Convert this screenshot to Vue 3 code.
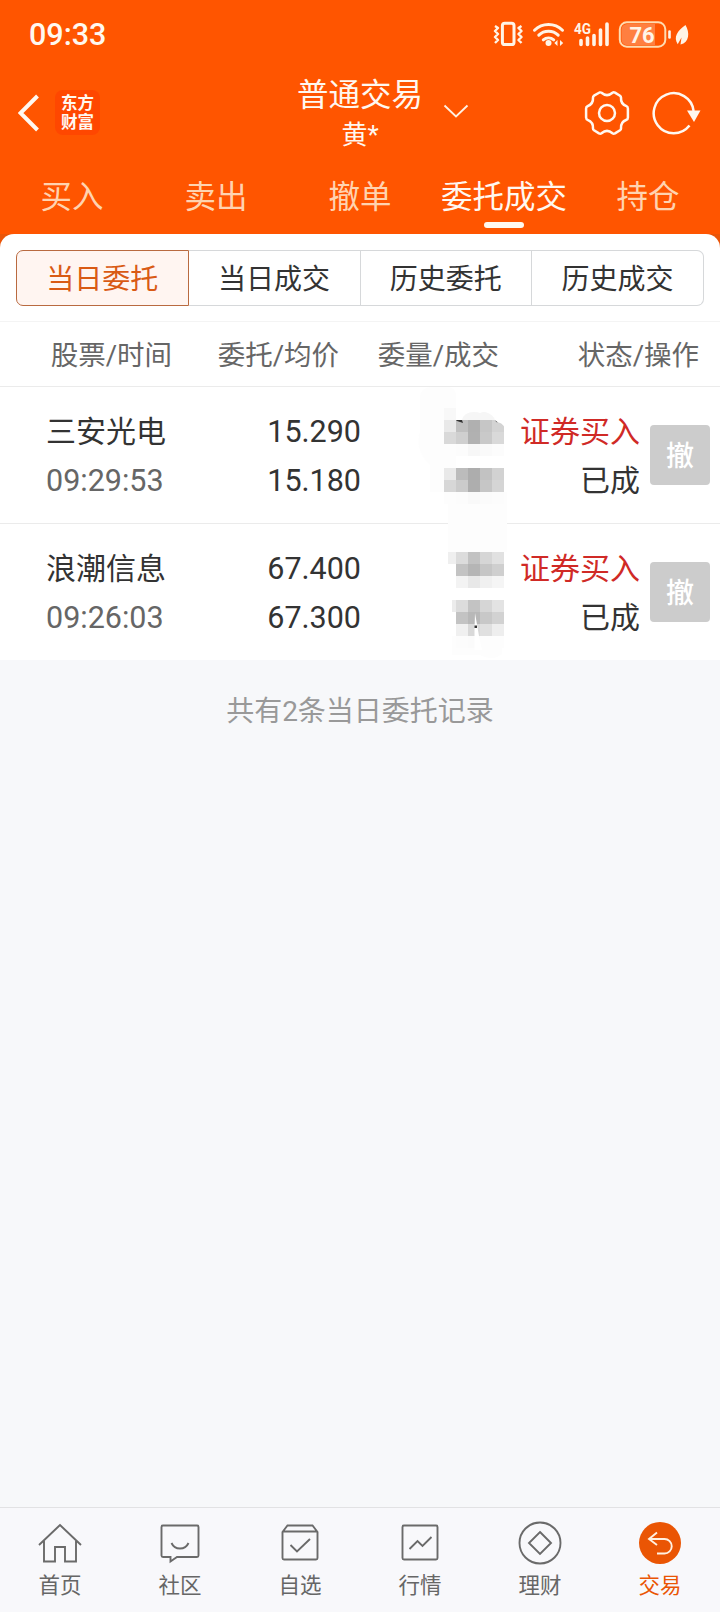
<template>
  <div class="page">
    <header class="top">
      <div class="status-bar">
        <span class="clock">09:33</span>
        <svg class="status-icons" width="210" height="36" viewBox="0 0 210 36">
          <!-- vibrate -->
          <g fill="none" stroke="#fff4e6" stroke-width="2.4" stroke-linejoin="round">
            <rect x="12.4" y="7.2" width="11.6" height="21.4" rx="2.4" stroke-width="3" />
            <path d="M5 10l3 2-3 3 3 3-3 3 3 3-3 3M31.5 10l-3 2 3 3-3 3 3 3-3 3 3 3" />
          </g>
          <!-- wifi -->
          <g fill="none" stroke="#fff4e6" stroke-width="3" stroke-linecap="round">
            <path d="M44.5 14.2a20 20 0 0 1 28 0" />
            <path d="M48.8 19.2a14 14 0 0 1 19.4 0" />
            <path d="M53.3 23.8a8 8 0 0 1 10.4 0" />
          </g>
          <circle cx="58.5" cy="27" r="3" fill="#fff4e6" />
          <path d="M67.5 24v6l-3.2-3zM70 24v6l3.2-3z" fill="#fff4e6" />
          <!-- signal -->
          <text x="84" y="18" class="net" textLength="17" lengthAdjust="spacingAndGlyphs">4G</text>
          <path
            d="M91 24.5v4M97.5 22v6.5M104 19.5v9M110.5 14v14.5M117 8v20.5"
            fill="none"
            stroke="#fff4e6"
            stroke-width="3.6"
            stroke-linecap="round"
          />
          <!-- battery -->
          <rect x="129.8" y="6.300" width="45.5" height="24.4" rx="7" class="battery" />
          <path d="M137 8h28v21h-28a5.500 5.500 0 0 1-5.500-5.500v-10a5.500 5.500 0 0 1 5.500-5.500z" fill="#ff7f40" />
          <text x="152" y="26.500" class="level" text-anchor="middle">76</text>
          <path d="M179.5 15.5v6" stroke="#fff4e6" stroke-width="2.6" stroke-linecap="round" />
          <path d="M195.5 9c4.500 7.500 4 17.500-5 19.500l1-7-3.800 6.800c-4.500-7.300-.5-13.300 7.800-19.300z" fill="#fff4e6" />
        </svg>
      </div>

      <div class="nav-bar">
        <div class="nav-side">
          <svg class="back" width="22" height="38" viewBox="0 0 22 38">
            <path d="M19.500 2L2.500 19l17 17" fill="none" stroke="#fff8f0" stroke-width="4" />
          </svg>
          <div class="logo"><span>东方</span><span>财富</span></div>
        </div>
        <div class="nav-title">
          <span class="title">普通交易</span>
          <span class="account">黄*</span>
          <svg class="chevron" width="26" height="15" viewBox="0 0 26 15">
            <path d="M1.500 1.500L13 12.500l11.500-11" fill="none" stroke="#fff1e2" stroke-width="1.900" />
          </svg>
        </div>
        <div class="nav-side nav-actions">
          <svg width="46" height="46" viewBox="-23 -23 46 46">
            <g fill="none" stroke="#fff8f0" stroke-width="2.500" stroke-linejoin="round">
              <path
                d="M-7.500 -20.500Q-6 -20.800 -5.500 -20.200Q0 -15.500 5.500 -20.200Q6.500 -21 8 -20.400L13 -17.300Q14 -16.500 14 -15.500Q13.500 -9 19.500 -6.800Q20.800 -6.300 20.900 -4.500V4.500Q20.900 6.300 19.500 6.800Q13.500 9 14 15.500Q14 16.500 13 17.300L8 20.400Q6.500 21 5.500 20.200Q0 15.500 -5.500 20.200Q-6.500 21 -8 20.400L-13 17.300Q-14 16.500 -14 15.500Q-13.500 9 -19.500 6.800Q-20.800 6.300 -20.900 4.500V-4.500Q-20.900 -6.300 -19.500 -6.800Q-13.500 -9 -14 -15.500Q-14 -16.500 -13 -17.300Z"
              />
              <circle r="8" />
            </g>
          </svg>
          <svg width="50" height="46" viewBox="-23 -23 50 46">
            <path d="M15.500 12.500A20 20 0 1 1 19.600 -2" fill="none" stroke="#fff8f0" stroke-width="2.500" />
            <path d="M13 -2.500H26.500L20 9Z" fill="#fff8f0" />
          </svg>
        </div>
      </div>

      <nav class="main-tabs">
        <span v-for="tab in mainTabs" :key="tab" class="main-tab" :class="{ active: tab === '委托成交' }">
          {{ tab }}
        </span>
      </nav>
    </header>

    <main class="content">
      <section class="card">
        <div class="segments">
          <button v-for="(item, i) in segments" :key="item" class="segment" :class="{ active: i === 0 }">
            {{ item }}
          </button>
        </div>

        <div class="table-head">
          <span class="col-name">股票/时间</span>
          <span class="col-price">委托/均价</span>
          <span class="col-amount">委量/成交</span>
          <span class="col-state">状态/操作</span>
        </div>

        <div v-for="order in orders" :key="order.name" class="order">
          <div class="name">
            <span>{{ order.name }}</span>
            <span class="time">{{ order.time }}</span>
          </div>
          <div class="price">
            <span>{{ order.price }}</span>
            <span>{{ order.avg }}</span>
          </div>
          <svg class="mask" width="96" height="136" viewBox="0 0 96 136">
            <path v-for="(s, i) in order.smudges" :key="'s' + i" :d="s.d" :fill="s.fill" />
            <rect
              v-for="(c, i) in order.cells"
              :key="i"
              :x="c[0]"
              :y="c[1]"
              :width="c[2]"
              height="12"
              :fill="c[3]"
              shape-rendering="crispEdges"
            />
            <path v-for="(m, i) in order.marks" :key="'m' + i" :d="m.d" :fill="m.fill" />
          </svg>
          <div class="state">
            <span class="buy">证券买入</span>
            <span>已成</span>
          </div>
          <button class="cancel">撤</button>
        </div>
      </section>

      <p class="summary">共有{{ orders.length }}条当日委托记录</p>
    </main>

    <footer class="bottom-bar">
      <div v-for="item in bottomItems" :key="item.label" class="bottom-item" :class="{ active: item.active }">
        <svg width="46" height="46" viewBox="-23 -23 46 46">
          <circle v-if="item.active" r="21" fill="#ea5504" />
          <path :d="item.path" class="glyph" />
        </svg>
        <span>{{ item.label }}</span>
      </div>
    </footer>
  </div>
</template>

<script setup>
const mainTabs = ['买入', '卖出', '撤单', '委托成交', '持仓']
const segments = ['当日委托', '当日成交', '历史委托', '历史成交']

// expand a row of grey levels into 12px blocks
const blocks = (y, levels, x = 42) =>
  levels.map((v, i) => [x + i * 12, y, 12, `#${v}${v}${v}`])

const orders = [
  {
    name: '三安光电',
    time: '09:29:53',
    price: '15.290',
    avg: '15.180',
    smudges: [
      { d: 'M6 12Q6 0 18 0H34Q42 0 42 10V105H16V78Q0 62 6 45Z', fill: '#fdfdfd' },
      { d: 'M34 105H93V142H34Z', fill: '#fdfdfd' },
      { d: 'M48 33Q50 25 60 25Q64 25 66 26Q70 24 74 26Q80 29 81 33Z', fill: '#f6f6f6' },
    ],
    cells: [
      [30, 21, 12, '#f8f8f8'],
      ...blocks(33, ['e9', 'c0', 'b0', 'c6', 'd3'], 30),
      ...blocks(45, ['d9', 'cf', 'b1', 'c9', 'd9'], 30),
      ...blocks(57, ['fd', 'fc', 'f7', 'fa', 'fc'], 30),
      ...blocks(81, ['e9', 'bc', 'ad', 'c2', 'd2'], 30),
      ...blocks(93, ['d7', 'cb', 'ae', 'c6', 'd5'], 30),
      ...blocks(105, ['fd', 'fc', 'f9', 'fb', 'fc'], 30),
    ],
    marks: [
      { d: 'M42 33H48L49 36L43 34Z', fill: '#333' },
      { d: 'M82 33H91V41Q88 35 82 35Z', fill: '#fff' },
      { d: 'M81.500 33.500L84 35.500L82 35Z', fill: '#555' },
    ],
  },
  {
    name: '浪潮信息',
    time: '09:26:03',
    price: '67.400',
    avg: '67.300',
    smudges: [{ d: 'M34 0H93V28H34ZM38 112H88V130Q78 138 66 131H38Z', fill: '#fdfdfd' }],
    cells: [
      [34, 28, 8, '#efefef'],
      ...blocks(28, ['dc', 'c2', 'd6', 'e1']),
      ...blocks(40, ['c3', 'b5', 'c6', 'cf']),
      ...blocks(52, ['f3', 'e8', 'f0', 'f5']),
      [38, 76, 4, '#ececec'],
      ...blocks(76, ['dc', 'c3', 'd6', 'e3']),
      ...blocks(88, ['c3', 'b8', 'c8', 'd2']),
      ...blocks(100, ['f0', 'd9', 'e0', 'ee']),
      ...blocks(112, ['fc', 'fb', 'fd', 'fd']),
    ],
    marks: [
      { d: 'M61 89L65 112L68 126L60.500 126V106Z', fill: '#fff' },
      { d: 'M60.500 101.500h2.500v2.500h-2.500z', fill: '#333' },
    ],
  },
]

const bottomItems = [
  { label: '首页', path: 'M-21 2L0 -18L21 2M-16 -2V18.500H-5V4H5V18.500H16V-2' },
  {
    label: '社区',
    path: 'M-17 -17.500H17Q18.500 -17.500 18.500 -16V12.500Q18.500 14 17 14H-3L-9.500 18.500V14H-17Q-18.500 14 -18.500 12.500V-16Q-18.500 -17.500 -17 -17.500ZM-8.500 0Q-6 5.500 0 5.500Q6 5.500 8.500 0',
  },
  {
    label: '自选',
    path: 'M-17.500 -11L-12.500 -17.500H12.500L17.500 -11V15Q17.500 16.500 16 16.500H-16Q-17.500 16.500 -17.500 15ZM-17.500 -11.500H17.500M-9.500 2L-3 8.500L10 -4',
  },
  {
    label: '行情',
    path: 'M-16 -17.500H16Q17.500 -17.500 17.500 -16V15Q17.500 16.500 16 16.500H-16Q-17.500 16.500 -17.500 15V-16Q-17.500 -17.500 -16 -17.500ZM-10.500 6L-2.500 -2L2.500 3L11.500 -6',
  },
  {
    label: '理财',
    path: 'M-20.500 0A20.500 20.500 0 1 1 20.500 0A20.500 20.500 0 1 1 -20.500 0ZM0 -11L11 0L0 11L-11 0Z',
  },
  { label: '交易', path: 'M-3 -10.500L-11 -4L-3 2M-11 -4H4.500A7 7 0 0 1 4.500 10.500H-3', active: true },
]
</script>

<style>
body {
  background: #f7f8fa;
}
</style>

<style scoped>
.page {
  display: flex;
  flex-direction: column;
  width: 720px;
  height: 1612px;
  overflow: hidden;
  background: #f7f8fa;
  color: #333;
  font-family: Roboto, 'Noto Sans CJK SC', sans-serif;
}

button {
  margin: 0;
  padding: 0;
  font-family: inherit;
}

.top {
  height: 234px;
  background: #ff5500;
  color: #fff8f0;
}

.status-bar {
  display: flex;
  justify-content: space-between;
  align-items: center;
  height: 68px;
  padding: 0 20px 0 29px;
}

.clock {
  font-size: 30.5px;
  font-weight: 500;
}

.net {
  fill: #fff4e6;
  font-size: 15px;
  font-weight: 700;
}

.battery {
  fill: none;
  stroke: #ffdcb0;
  stroke-width: 2;
}

.level {
  fill: #fff4e6;
  font-size: 22px;
  font-weight: 700;
}

.nav-bar {
  display: flex;
  align-items: center;
  justify-content: space-between;
  height: 89px;
}

.nav-side {
  display: flex;
  align-items: center;
  width: 200px;
  padding-left: 18px;
  box-sizing: border-box;
}

.logo {
  display: flex;
  flex-direction: column;
  align-items: center;
  justify-content: center;
  width: 45px;
  height: 45px;
  margin-left: 15px;
  border-radius: 8px;
  background: #ff4700;
  font-size: 16.5px;
  font-weight: 700;
  line-height: 19px;
}

.nav-title {
  position: relative;
  display: flex;
  flex-direction: column;
  align-items: center;
  padding-top: 5px;
}

.title {
  font-size: 31.5px;
  line-height: 40px;
}

.account {
  font-size: 26px;
  line-height: 38px;
}

.chevron {
  position: absolute;
  left: 146px;
  top: 33px;
}

.nav-actions {
  justify-content: flex-end;
  gap: 21px;
  padding: 0 19px 0 0;
}

.main-tabs {
  display: flex;
  height: 77px;
}

.main-tab {
  display: flex;
  flex-direction: column;
  align-items: center;
  width: 144px;
  padding-top: 18px;
  box-sizing: border-box;
  color: #ffd3b0;
  font-size: 31.5px;
  line-height: 46px;
  white-space: nowrap;
}

.main-tab.active {
  color: #fff8f0;
}

.main-tab.active::after {
  content: '';
  width: 40px;
  height: 6px;
  margin-top: 1px;
  border-radius: 3px;
  background: #fff8f0;
}

.content {
  flex: 1;
  background: linear-gradient(#ea5508 20px, #f7f8fa 20px);
}

.card {
  border-radius: 14px 14px 0 0;
  background: #fff;
}

.segments {
  display: flex;
  height: 88px;
  padding: 16px 16px 15px;
  box-sizing: border-box;
  border-bottom: 1px solid #f4f4f4;
}

.segment {
  flex: 1 1 0;
  height: 56px;
  padding-bottom: 2px;
  border: 1px solid #d6d8da;
  border-left-width: 0;
  background: #fff;
  color: #333;
  font-size: 28px;
}

.segment.active {
  border: 1px solid #b96a40;
  border-radius: 7px 0 0 7px;
  background: #fff5f1;
  color: #d95a14;
}

.segment:last-child {
  border-radius: 0 7px 7px 0;
}

.table-head {
  display: flex;
  align-items: center;
  height: 65px;
  padding-bottom: 2px;
  box-sizing: border-box;
  border-bottom: 1px solid #ebebeb;
  color: #666;
  font-size: 27.5px;
  text-align: right;
}

.col-name {
  width: 172px;
}

.col-price {
  width: 167px;
}

.col-amount {
  width: 160px;
}

.col-state {
  width: 200px;
}

.order {
  display: flex;
  align-items: center;
  height: 137px;
  padding-left: 46px;
  box-sizing: border-box;
  border-bottom: 1px solid #ebebeb;
  font-size: 30px;
  line-height: 49px;
}

.order:last-child {
  height: 136px;
  border-bottom: none;
}

.name,
.price,
.state {
  display: flex;
  flex-direction: column;
  padding-top: 2px;
}

.name {
  width: 160px;
}

.name .time {
  color: #666;
  font-size: 30.5px;
}

.price {
  align-items: flex-end;
  width: 155px;
  font-size: 30.5px;
}

.mask {
  margin-left: 53px;
  overflow: visible;
}

.state {
  align-items: flex-end;
  width: 130px;
}

.buy {
  color: #d02a26;
}

.cancel {
  width: 60px;
  height: 60px;
  margin-left: 10px;
  padding-bottom: 2px;
  border: none;
  border-radius: 4px;
  background: #ccc;
  color: #fff;
  font-size: 28px;
  font-weight: 500;
}

.summary {
  margin: 31px 0 0;
  color: #999;
  font-size: 28px;
  line-height: 42px;
  text-align: center;
}

.bottom-bar {
  display: flex;
  height: 105px;
  box-sizing: border-box;
  border-top: 1px solid #e2e2e4;
  background: #f8f8fb;
}

.bottom-item {
  display: flex;
  flex: 1;
  flex-direction: column;
  align-items: center;
  padding-top: 12px;
  color: #666;
  font-size: 21.5px;
  line-height: 40px;
}

.bottom-item.active {
  color: #ea5504;
}

.glyph {
  fill: none;
  stroke: #6a6a6a;
  stroke-width: 1.9;
}

.active .glyph {
  stroke: #fff1e2;
}
</style>
